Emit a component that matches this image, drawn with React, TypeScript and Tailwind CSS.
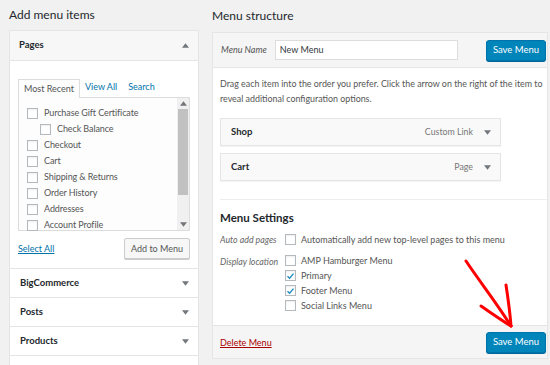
import React from 'react';

const font = { fontFamily: 'Lato, "Open Sans", sans-serif' };

function Check({ checked = false }: { checked?: boolean }) {
  return (
    <span className="inline-flex h-[11px] w-[11px] shrink-0 items-center justify-center border border-[#b4b9be] bg-white shadow-[inset_0_1px_2px_rgba(0,0,0,0.07)]">
      {checked && (
        <svg viewBox="0 0 12 12" className="h-[10px] w-[10px]">
          <path d="M2 6.2 L4.8 9 L10 2.8" fill="none" stroke="#1e8cbe" strokeWidth="1.8" />
        </svg>
      )}
    </span>
  );
}

function Caret({ up = false }: { up?: boolean }) {
  return (
    <svg viewBox="0 0 8 5" className="h-[5px] w-[7px]">
      <path d={up ? 'M0 5 L4 0 L8 5 Z' : 'M0 0 L8 0 L4 5 Z'} fill="#72777c" />
    </svg>
  );
}

const pages = [
  { label: 'Purchase Gift Certificate' },
  { label: 'Check Balance', indent: true },
  { label: 'Checkout' },
  { label: 'Cart' },
  { label: 'Shipping & Returns' },
  { label: 'Order History' },
  { label: 'Addresses' },
  { label: 'Account Profile' },
];

function Accordion({ title }: { title: string }) {
  return (
    <div className="flex h-[29px] shrink-0 items-center justify-between border-t border-[#e5e5e5] bg-white pl-[10px] pr-[9px]">
      <span className="text-[9.5px] font-bold text-[#23282d]">{title}</span>
      <Caret />
    </div>
  );
}

export default function App() {
  return (
    <div className="relative flex h-[365px] w-[550px] gap-[13px] overflow-hidden bg-[#f1f1f1] pl-[9px] text-[#444]" style={font}>
      {/* left column */}
      <div className="flex w-[190px] shrink-0 flex-col">
        <h2 className="flex h-[30px] shrink-0 items-center text-[12px] text-[#23282d]">Add menu items</h2>
        <div className="flex-1 overflow-hidden border border-b-0 border-[#e5e5e5] bg-white">
          <div className="flex h-[30px] items-center justify-between border-b border-[#e5e5e5] bg-[#f7f7f7] pl-[9px] pr-[9px]">
            <span className="text-[9.5px] font-bold text-[#23282d]">Pages</span>
            <Caret up />
          </div>
          <div className="px-[8px] pb-[9px] pt-[17px]">
            <div className="flex h-[19px] items-end text-[9px]">
              <span className="-mb-px flex h-[19px] items-center border border-b-0 border-[#ddd] bg-[#fdfdfd] px-[5px] text-[#555]">Most Recent</span>
              <span className="ml-[5px] pb-[4px] text-[#0073aa]">View All</span>
              <span className="ml-[11px] pb-[4px] text-[#0073aa]">Search</span>
            </div>
            <div className="flex h-[134px] border border-[#ddd] bg-[#fdfdfd]">
              <div className="flex-1 pl-[8px] pt-[7px]">
                {pages.map((p) => (
                  <div key={p.label} className={`flex h-[16px] items-center gap-[6px] text-[9px] tracking-[-0.1px] text-[#555] ${p.indent ? 'pl-[13px]' : ''}`}>
                    <Check />
                    <span>{p.label}</span>
                  </div>
                ))}
              </div>
              <div className="flex w-[12px] flex-col items-center bg-[#f0f0f0]">
                <div className="flex h-[11px] items-center"><Caret up /></div>
                <div className="h-[86px] w-[10px] bg-[#c1c1c1]" />
                <div className="flex-1" />
                <div className="flex h-[11px] items-center"><Caret /></div>
              </div>
            </div>
            <div className="mt-[7px] flex items-center justify-between">
              <span className="text-[9px] text-[#0073aa] underline">Select All</span>
              <span className="flex h-[21px] w-[66px] items-center justify-center rounded-[2px] border border-[#ccc] bg-[#f7f7f7] text-[9px] text-[#555] shadow-[0_1px_0_#ccc]">Add to Menu</span>
            </div>
          </div>
          <Accordion title="BigCommerce" />
          <Accordion title="Posts" />
          <Accordion title="Products" />
          <div className="h-[20px] border-t border-[#e5e5e5]" />
        </div>
      </div>

      {/* right column */}
      <div className="flex flex-1 flex-col pr-[2px]">
        <h2 className="flex h-[32px] shrink-0 items-center text-[12px] text-[#23282d]">Menu structure</h2>
        <div className="border border-[#e5e5e5] bg-white">
          <div className="flex h-[35px] items-center border-b border-[#e5e5e5] bg-[#f5f5f5] pl-[8px] pr-[1px]">
            <span className="text-[9px] italic text-[#555]">Menu Name</span>
            <span className="ml-[8px] flex h-[20px] w-[183px] items-center border border-[#ddd] bg-white pl-[4px] text-[9px] text-[#32373c]">New Menu</span>
            <div className="flex-1" />
            <span className="flex h-[21px] w-[60px] items-center justify-center rounded-[3px] border border-[#0073aa] bg-[#0085ba] text-[9.5px] text-white shadow-[0_1px_0_#006799]">Save Menu</span>
          </div>
          <div className="pl-[7px]">
            <p className="pt-[8px] text-[8.9px] leading-[15px] text-[#555]">
              Drag each item into the order you prefer. Click the arrow on the right of the item to reveal additional configuration options.
            </p>
            <div className="mt-[12px] flex w-[281px] flex-col gap-[7px]">
              {[
                { t: 'Shop', k: 'Custom Link' },
                { t: 'Cart', k: 'Page' },
              ].map((i) => (
                <div key={i.t} className="flex h-[28px] items-center justify-between border border-[#e5e5e5] bg-[#f9f9f9] pl-[10px] pr-[9px] shadow-[0_1px_1px_rgba(0,0,0,0.04)]">
                  <span className="text-[9.5px] font-bold text-[#23282d]">{i.t}</span>
                  <span className="flex items-center gap-[11px] text-[8.8px] text-[#777]">
                    {i.k}
                    <Caret />
                  </span>
                </div>
              ))}
            </div>
            <div className="mt-[18px] border-t border-[#eee]" />
            <h3 className="mt-[9px] text-[11.5px] font-bold text-[#23282d]">Menu Settings</h3>
            <div className="mt-[5px] flex text-[9px]">
              <div className="w-[65px] shrink-0 text-[8.8px] italic text-[#666]">
                <div className="flex h-[16px] items-center">Auto add pages</div>
                <div className="mt-[6px] flex h-[16px] items-center">Display location</div>
              </div>
              <div className="text-[#555]">
                <div className="flex h-[16px] items-center gap-[5px]"><Check /><span>Automatically add new top-level pages to this menu</span></div>
                <div className="mt-[6px] flex h-[15px] items-center gap-[5px]"><Check /><span>AMP Hamburger Menu</span></div>
                <div className="flex h-[15px] items-center gap-[5px]"><Check checked /><span>Primary</span></div>
                <div className="flex h-[15px] items-center gap-[5px]"><Check checked /><span>Footer Menu</span></div>
                <div className="flex h-[15px] items-center gap-[5px]"><Check /><span>Social Links Menu</span></div>
              </div>
            </div>
            <div className="h-[12px]" />
          </div>
          <div className="flex h-[33px] items-center justify-between border-t border-[#e5e5e5] bg-[#f5f5f5] pl-[7px] pr-[1px]">
            <span className="text-[9px] text-[#a00] underline">Delete Menu</span>
            <span className="flex h-[21px] w-[60px] items-center justify-center rounded-[3px] border border-[#0073aa] bg-[#0085ba] text-[9.5px] text-white shadow-[0_1px_0_#006799]">Save Menu</span>
          </div>
        </div>
      </div>

      {/* hand-drawn red arrow over the save button */}
      <svg className="pointer-events-none absolute left-0 top-0" width="550" height="365" viewBox="0 0 550 365">
        <path d="M466 261 C480 282 496 302 511 326" fill="none" stroke="#f00" strokeWidth="3" strokeLinecap="round" />
        <path d="M481 306 C491 313 501 320 511 326" fill="none" stroke="#f00" strokeWidth="3" strokeLinecap="round" />
        <path d="M506 285 C508 298 510 312 511 326" fill="none" stroke="#f00" strokeWidth="3" strokeLinecap="round" />
      </svg>
    </div>
  );
}
